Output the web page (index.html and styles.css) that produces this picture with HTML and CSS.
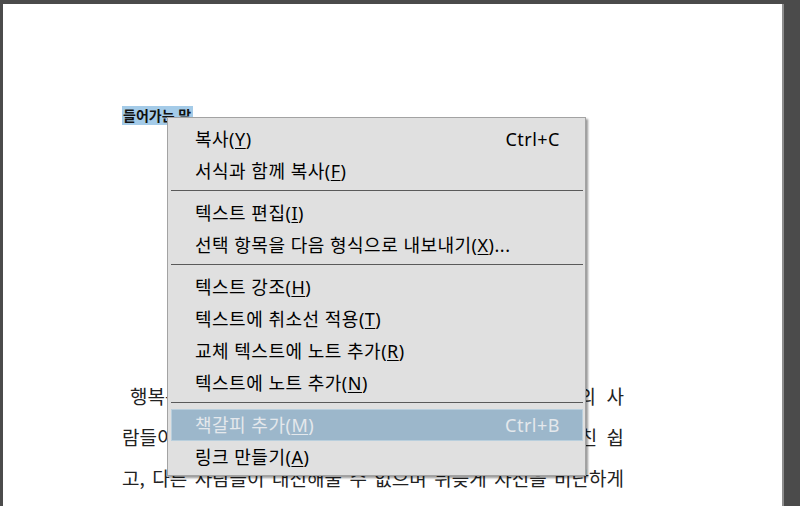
FILE: index.html
```html
<!DOCTYPE html>
<html lang="ko">
<head>
    <meta charset="UTF-8">
    <title>들어가는 말</title>
    <link rel="stylesheet" href="styles.css">
</head>
<body>
    <div class="page">
        <h2 class="title"><span class="selected">들어가는 말</span></h2>
        <p class="text">
            행복은 누구에게나 주어지는 것이지만 결국 우리 주위의 사<br>
            람들이 흔히 생각하는 행복은 어렵지 않고 오히려 아주 친 쉽<br>
            고, 다른 사람들이 대신해줄 수 없으며 뒤늦게 자신을 비난하게
        </p>

        <!-- 우클릭 메뉴 -->
        <ul class="menu">
            <li class="item"><span>복사(<u>Y</u>)</span><span class="key">Ctrl+C</span></li>
            <li class="item"><span>서식과 함께 복사(<u>F</u>)</span></li>
            <li class="sep"></li>
            <li class="item"><span>텍스트 편집(<u>I</u>)</span></li>
            <li class="item"><span>선택 항목을 다음 형식으로 내보내기(<u>X</u>)...</span></li>
            <li class="sep"></li>
            <li class="item"><span>텍스트 강조(<u>H</u>)</span></li>
            <li class="item"><span>텍스트에 취소선 적용(<u>T</u>)</span></li>
            <li class="item"><span>교체 텍스트에 노트 추가(<u>R</u>)</span></li>
            <li class="item"><span>텍스트에 노트 추가(<u>N</u>)</span></li>
            <li class="sep"></li>
            <li class="item active"><span>책갈피 추가(<u>M</u>)</span><span class="key">Ctrl+B</span></li>
            <li class="item"><span>링크 만들기(<u>A</u>)</span></li>
        </ul>
    </div>
</body>
</html>
```

FILE: styles.css
```css
body {
    background-color: #4b4b4b;
    margin: 0;
    overflow: hidden;
}
.page {
    background-color: #FFFFFF;
    border-right: 2px solid #8e8e8e;
    box-sizing: border-box;
    height: 502px;
    margin: 4px 0 0 3px;
    padding: 102px 0 0 119px;
    position: relative;
    width: 781px;
}
.title {
    font-family: "Noto Sans", "Noto Sans CJK KR", sans-serif;
    font-size: 14px;
    font-weight: bold;
    line-height: 20px;
    margin: 0;
}
.selected {
    background-color: #a4cbe8;
    color: #111;
    padding: 0 2px 0 1px;
}
.text {
    color: #222;
    font-family: "Noto Sans CJK KR", serif;
    font-size: 19px;
    line-height: 41px;
    margin: 249px 0 0 0;
    text-align: justify;
    text-align-last: justify;
    text-indent: 8px;
    width: 502px;
}
.menu {
    background-color: #e0e0e0;
    border: 1px solid #a3a3a3;
    box-shadow: 2px 2px 2px rgba(0, 0, 0, 0.4);
    box-sizing: border-box;
    font-family: "Noto Sans", "Noto Sans CJK KR", sans-serif;
    font-size: 18px;
    left: 164px;
    list-style: none;
    margin: 0;
    padding: 5px 0 2px 0;
    position: absolute;
    top: 113px;
    width: 419px;
}
.item {
    color: #000;
    display: flex;
    height: 32px;
    justify-content: space-between;
    letter-spacing: 0.5px;
    line-height: 32px;
    padding: 0 25px 0 27px;
    white-space: pre;
}
.item u {
    text-decoration-thickness: 1px;
    text-underline-offset: 2px;
}
.active {
    background-color: #9cb7cb;
    border: 1px solid #b9cfdd;
    color: #e4e8ec;
    height: 30px;
    line-height: 30px;
    margin: 0 2px 0 3px;
    padding: 0 22px 0 23px;
}
.sep {
    border-top: 1px solid #5a5a5a;
    height: 0;
    margin: 3px 2px 6px 3px;
}
```
